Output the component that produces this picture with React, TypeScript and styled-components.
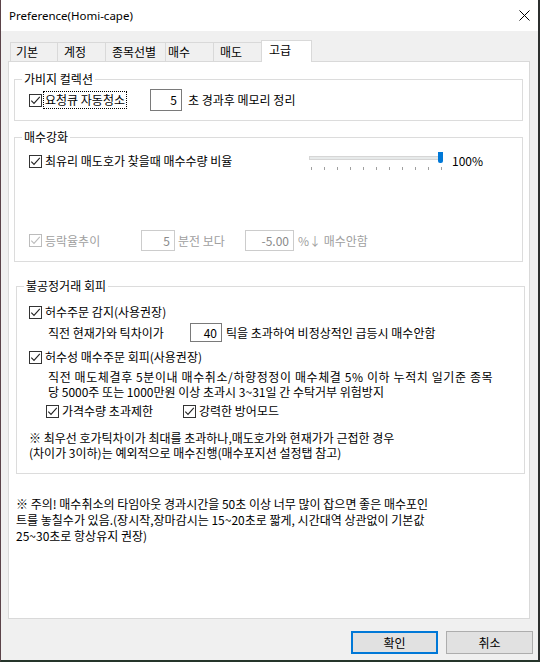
import React from 'react';
import styled, { createGlobalStyle } from 'styled-components';

const GlobalStyle = createGlobalStyle`
  html, body {
    margin: 0;
    padding: 0;
    background: #2e2a2c;
  }
  body {
    font-family: "Noto Sans CJK KR", "Noto Sans", sans-serif;
    font-size: 12px;
    line-height: 16px;
    color: #000;
  }
  * {
    box-sizing: border-box;
  }
`;

const Window = styled.div`
  width: 540px;
  height: 662px;
  border-left: 1px solid #5b4349;
  border-right: 2px solid #2c2f2e;
  border-bottom: 2px solid #25352a;
  background: #f0f0f0;
  display: flex;
  flex-direction: column;
`;

const TitleBar = styled.div`
  height: 31px;
  flex: none;
  background: #fff;
  display: flex;
  align-items: center;
  justify-content: space-between;
  padding: 0 8px 0 8px;
  font-family: "Segoe UI", "Noto Sans", sans-serif;
  font-size: 11.5px;
`;

const TabRow = styled.div`
  display: flex;
  align-items: flex-end;
  height: 22px;
  margin: 9px 0 -1px 9px;
  position: relative;
  z-index: 1;
`;

const Tab = styled.div<{ $w: number; $pl: number; $active?: boolean }>`
  width: ${(p) => p.$w}px;
  height: ${(p) => (p.$active ? 22 : 19)}px;
  margin-bottom: ${(p) => (p.$active ? 0 : 1)}px;
  padding: 0 0 ${(p) => (p.$active ? 3 : 1)}px ${(p) => p.$pl}px;
  border-top: 1px solid #d9d9d9;
  border-left: 1px solid #d9d9d9;
  border-right: ${(p) => (p.$active ? '1px solid #d9d9d9' : 'none')};
  background: ${(p) => (p.$active ? '#fff' : '#f0f0f0')};
  display: flex;
  align-items: center;
  white-space: nowrap;
`;

const Panel = styled.div`
  height: 558px;
  flex: none;
  margin: 0 8px 0 7px;
  background: #fff;
  border: 1px solid #d9d9d9;
  display: flex;
  flex-direction: column;
  align-items: flex-start;
`;

const Group = styled.fieldset<{ $ml: number; $mt: number }>`
  margin: ${(p) => p.$mt}px 0 0 ${(p) => p.$ml}px;
  width: 509px;
  min-width: 0;
  padding: 0;
  border: 1px solid #dcdcdc;
`;

const Legend = styled.legend`
  margin-left: 7px;
  padding: 0 2px;
  line-height: 16px;
`;

const GroupBody = styled.div<{ $pt: number; $pb: number; $pl: number }>`
  padding: ${(p) => p.$pt}px 0 ${(p) => p.$pb}px ${(p) => p.$pl}px;
  display: flex;
  flex-direction: column;
`;

const Row = styled.div<{ $h: number; $mt?: number; $pl?: number }>`
  display: flex;
  align-items: center;
  height: ${(p) => p.$h}px;
  margin-top: ${(p) => p.$mt ?? 0}px;
  padding-left: ${(p) => p.$pl ?? 0}px;
  white-space: nowrap;
`;

const CheckItem = styled.div<{ $w?: number }>`
  display: flex;
  align-items: center;
  flex: none;
  width: ${(p) => (p.$w ? `${p.$w}px` : 'auto')};
`;

const Box = styled.span<{ $disabled?: boolean }>`
  width: 13px;
  height: 13px;
  flex: none;
  border: 1px solid ${(p) => (p.$disabled ? '#bcbcbc' : '#333')};
  background: #fff;
  display: flex;
  align-items: center;
  justify-content: center;
`;

const CheckText = styled.span<{ $disabled?: boolean; $focus?: boolean }>`
  margin-left: ${(p) => (p.$focus ? 1 : 3)}px;
  padding: ${(p) => (p.$focus ? '0 1px' : '0')};
  border: ${(p) => (p.$focus ? '1px dotted #000' : 'none')};
  line-height: 16px;
  color: ${(p) => (p.$disabled ? '#a0a0a0' : '#000')};
`;

const TextBox = styled.div<{ $w: number; $h: number; $ml?: number; $disabled?: boolean }>`
  width: ${(p) => p.$w}px;
  height: ${(p) => p.$h}px;
  margin-left: ${(p) => p.$ml ?? 0}px;
  flex: none;
  border: 1px solid ${(p) => (p.$disabled ? '#cccccc' : '#7a7a7a')};
  background: #fff;
  display: flex;
  align-items: center;
  justify-content: flex-end;
  padding-right: 4px;
  color: ${(p) => (p.$disabled ? '#8a8a8a' : '#000')};
`;

const Text = styled.span<{ $ml?: number; $w?: number; $disabled?: boolean }>`
  margin-left: ${(p) => p.$ml ?? 0}px;
  width: ${(p) => (p.$w ? `${p.$w}px` : 'auto')};
  flex: none;
  color: ${(p) => (p.$disabled ? '#a0a0a0' : '#000')};
`;

const Para = styled.div<{ $mt: number; $pl: number }>`
  margin-top: ${(p) => p.$mt}px;
  padding-left: ${(p) => p.$pl}px;
  display: flex;
  flex-direction: column;
  white-space: nowrap;
`;

const Line = styled.span<{ $lh: number; $ls?: number }>`
  display: block;
  height: ${(p) => p.$lh}px;
  line-height: ${(p) => p.$lh}px;
  letter-spacing: ${(p) => p.$ls ?? 0}px;
`;

const Slider = styled.div`
  position: relative;
  width: 134px;
  height: 20px;
  flex: none;
`;

const Track = styled.div`
  position: absolute;
  left: 0;
  right: 2px;
  top: 5px;
  height: 4px;
  background: #e7eaea;
  border: 1px solid #d6d6d6;
`;

const Thumb = styled.div`
  position: absolute;
  left: 129px;
  top: 1px;
  width: 5px;
  height: 11px;
  background: #0078d7;
  border-radius: 0 0 2px 2px;
`;

const Ticks = styled.div`
  position: absolute;
  left: 2px;
  right: 1px;
  top: 16px;
  height: 3px;
  display: flex;
  justify-content: space-between;
`;

const Tick = styled.span`
  width: 1px;
  height: 3px;
  background: #a0a0a0;
`;

const ButtonRow = styled.div`
  display: flex;
  justify-content: flex-end;
  gap: 8px;
  margin-top: 12px;
  padding-right: 5px;
`;

const Button = styled.button<{ $default?: boolean }>`
  width: 87px;
  height: 23px;
  padding: 0;
  background: #e1e1e1;
  border: ${(p) => (p.$default ? '2px solid #0078d7' : '1px solid #adadad')};
  font-family: inherit;
  font-size: 12px;
  line-height: 16px;
  color: #000;
`;

const Check = ({ disabled }: { disabled?: boolean }) => (
  <Box $disabled={disabled}>
    <svg width="11" height="11" viewBox="0 0 11 11">
      <path
        d="M1.3 5.6 L4 8.4 L9.8 1.8"
        fill="none"
        stroke={disabled ? '#bcbcbc' : '#222'}
        strokeWidth="1.1"
      />
    </svg>
  </Box>
);

const tabs = [
  { label: '기본', w: 47, pl: 5 },
  { label: '계정', w: 48, pl: 6 },
  { label: '종목선별', w: 60, pl: 6 },
  { label: '매수', w: 48, pl: 2 },
  { label: '매도', w: 48, pl: 6 },
  { label: '고급', w: 51, pl: 7, active: true },
];

export default function App() {
  return (
    <>
      <GlobalStyle />
      <Window>
        <TitleBar>
          <span>Preference(Homi-cape)</span>
          <svg width="11" height="11" viewBox="0 0 11 11">
            <path d="M0.5 0.5 L10.5 10.5 M10.5 0.5 L0.5 10.5" stroke="#000" strokeWidth="1" />
          </svg>
        </TitleBar>

        <TabRow>
          {tabs.map((t) => (
            <Tab key={t.label} $w={t.w} $pl={t.pl} $active={t.active}>
              {t.label}
            </Tab>
          ))}
        </TabRow>

        <Panel>
          <Group $ml={5} $mt={9}>
            <Legend>가비지 컬렉션</Legend>
            <GroupBody $pt={2} $pb={9} $pl={14}>
              <Row $h={22}>
                <CheckItem $w={121}>
                  <Check />
                  <CheckText $focus>요청큐 자동청소</CheckText>
                </CheckItem>
                <TextBox $w={32} $h={22}>5</TextBox>
                <Text $ml={6}>초 경과후 메모리 정리</Text>
              </Row>
            </GroupBody>
          </Group>

          <Group $ml={5} $mt={8}>
            <Legend>매수강화</Legend>
            <GroupBody $pt={6} $pb={10} $pl={14}>
              <Row $h={20}>
                <CheckItem $w={280}>
                  <Check />
                  <CheckText>최유리 매도호가 찾을때 매수수량 비율</CheckText>
                </CheckItem>
                <Slider>
                  <Track />
                  <Ticks>
                    {Array.from({ length: 11 }).map((_, i) => (
                      <Tick key={i} />
                    ))}
                  </Ticks>
                  <Thumb />
                </Slider>
                <Text $ml={9}>100%</Text>
              </Row>
              <Row $h={21} $mt={59}>
                <CheckItem $w={112}>
                  <Check disabled />
                  <CheckText $disabled>등락율추이</CheckText>
                </CheckItem>
                <TextBox $w={34} $h={21} $disabled>5</TextBox>
                <Text $ml={3} $w={67} $disabled>분전 보다</Text>
                <TextBox $w={49} $h={21} $disabled>-5.00</TextBox>
                <Text $ml={4} $disabled>%↓ 매수안함</Text>
              </Row>
            </GroupBody>
          </Group>

          <Group $ml={7} $mt={16}>
            <Legend>불공정거래 회피</Legend>
            <GroupBody $pt={10} $pb={13} $pl={12}>
              <Row $h={16}>
                <CheckItem>
                  <Check />
                  <CheckText>허수주문 감지(사용권장)</CheckText>
                </CheckItem>
              </Row>
              <Row $h={19} $mt={3} $pl={19}>
                <Text $w={142}>직전 현재가와 틱차이가</Text>
                <TextBox $w={32} $h={19}>40</TextBox>
                <Text $ml={4}>틱을 초과하여 비정상적인 급등시 매수안함</Text>
              </Row>
              <Row $h={16} $mt={7}>
                <CheckItem>
                  <Check />
                  <CheckText>허수성 매수주문 회피(사용권장)</CheckText>
                </CheckItem>
              </Row>
              <Para $mt={4} $pl={19}>
                <Line $lh={15} $ls={0.6}>
                  직전 매도체결후 5분이내 매수취소/하향정정이 매수체결 5% 이하 누적치 일기준 종목
                </Line>
                <Line $lh={15}>당 5000주 또는 1000만원 이상 초과시 3~31일 간 수탁거부 위험방지</Line>
              </Para>
              <Row $h={16} $mt={4} $pl={17}>
                <CheckItem $w={137}>
                  <Check />
                  <CheckText>가격수량 초과제한</CheckText>
                </CheckItem>
                <CheckItem>
                  <Check />
                  <CheckText>강력한 방어모드</CheckText>
                </CheckItem>
              </Row>
              <Para $mt={11} $pl={0}>
                <Line $lh={15}>
                  ※ 최우선 호가틱차이가 최대를 초과하나,매도호가와 현재가가 근접한 경우
                </Line>
                <Line $lh={15}>(차이가 3이하)는 예외적으로 매수진행(매수포지션 설정탭 참고)</Line>
              </Para>
            </GroupBody>
          </Group>

          <Para $mt={22} $pl={7}>
            <Line $lh={16}>
              ※ 주의! 매수취소의 타임아웃 경과시간을 50초 이상 너무 많이 잡으면 좋은 매수포인
            </Line>
            <Line $lh={16}>
              트를 놓칠수가 있음.(장시작,장마감시는 15~20초로 짧게, 시간대역 상관없이 기본값
            </Line>
            <Line $lh={16}>25~30초로 항상유지 권장)</Line>
          </Para>
        </Panel>

        <ButtonRow>
          <Button $default>확인</Button>
          <Button>취소</Button>
        </ButtonRow>
      </Window>
    </>
  );
}
